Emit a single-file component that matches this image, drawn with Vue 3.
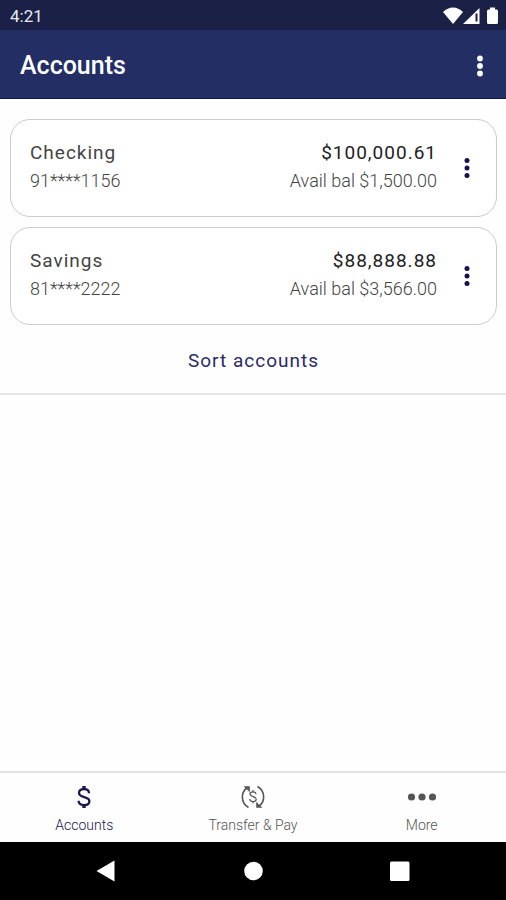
<script setup>
import { ref } from 'vue'

const accounts = [
  { name: 'Checking', number: '91****1156', balance: '$100,000.61', available: '$1,500.00' },
  { name: 'Savings', number: '81****2222', balance: '$88,888.88', available: '$3,566.00' },
]

const tabs = [
  { id: 'accounts', label: 'Accounts' },
  { id: 'transfer', label: 'Transfer & Pay' },
  { id: 'more', label: 'More' },
]

const activeTab = ref('accounts')
</script>

<template>
  <div class="screen">
    <div class="status-bar">
      <span>4:21</span>
      <svg class="status-icons" viewBox="0 0 56 20" aria-hidden="true">
        <path d="M0 6C3 3 6.500 1.500 10 1.500s7 1.500 10 4.500L10 18z" fill="#fff" />
        <path d="M20 18L36.500 2v16z" fill="#fff" />
        <path d="M32.500 7.500h2v8h-2z" fill="#1a2046" />
        <path d="M47 1.500h5v2h1.500q1.500 0 1.500 1.500v11.500q0 1.500-1.500 1.500h-8q-1.500 0-1.500-1.500V5q0-1.500 1.500-1.500h1.500z" fill="#fff" />
      </svg>
    </div>

    <header class="app-bar">
      <h1>Accounts</h1>
      <button class="icon-button" type="button" aria-label="More options">
        <svg class="kebab" viewBox="0 0 8 22" aria-hidden="true">
          <circle cx="4" cy="3.500" r="2.900" />
          <circle cx="4" cy="11" r="2.900" />
          <circle cx="4" cy="18.500" r="2.900" />
        </svg>
      </button>
    </header>

    <main class="content">
      <section class="panel">
        <article v-for="account in accounts" :key="account.number" class="card">
          <div class="identity">
            <h2 class="name">{{ account.name }}</h2>
            <p class="detail">{{ account.number }}</p>
          </div>
          <div class="amounts">
            <p class="balance">{{ account.balance }}</p>
            <p class="detail">Avail bal {{ account.available }}</p>
          </div>
          <button class="icon-button card-menu" type="button" :aria-label="account.name + ' options'">
            <svg class="kebab" viewBox="0 0 8 22" aria-hidden="true">
              <circle cx="4" cy="3.500" r="2.500" />
              <circle cx="4" cy="11" r="2.500" />
              <circle cx="4" cy="18.500" r="2.500" />
            </svg>
          </button>
        </article>
        <button class="sort" type="button">Sort accounts</button>
      </section>
    </main>

    <nav class="tabs" aria-label="Main">
      <button
        v-for="tab in tabs"
        :key="tab.id"
        type="button"
        class="tab"
        :class="{ active: tab.id === activeTab }"
        @click="activeTab = tab.id"
      >
        <svg v-if="tab.id === 'accounts'" class="tab-icon" viewBox="0 0 30 26" aria-hidden="true">
          <g fill="none" stroke="currentColor" stroke-width="2.300">
            <path d="M20 9.200C20 6.600 18 5.200 15 5.200S10 6.600 10 9c0 5.400 10.400 2.800 10.400 8.200 0 2.500-2.200 3.900-5.400 3.900s-5.400-1.500-5.400-4.300" />
            <path d="M15 2v3.500M15 20.500V24" stroke-width="3.400" />
          </g>
        </svg>
        <svg v-else-if="tab.id === 'transfer'" class="tab-icon" viewBox="0 0 30 26" aria-hidden="true">
          <g fill="none" stroke="currentColor" stroke-width="1.600">
            <path d="M10.500 23.500C2.500 19 2.500 8 9.500 3.500" />
            <path d="M19.500 2.500C27.500 7 27.500 18 20.500 22.500" />
            <path d="M18 10.200c0-1.500-1.200-2.300-3-2.300s-3 .8-3 2.200c0 3.300 6.200 1.800 6.200 5.100 0 1.500-1.300 2.300-3.200 2.300s-3.200-.9-3.200-2.500M15 6v2M15 17.500v2" stroke-width="1.200" />
          </g>
          <path d="M5.500 2.200h6.300V8.200L9.300 5.700zM24.500 23.800h-6.300v-6l2.500 2.500z" fill="currentColor" />
        </svg>
        <svg v-else class="tab-icon" viewBox="0 0 30 26" aria-hidden="true">
          <g fill="currentColor">
            <circle cx="4.500" cy="13" r="3.600" />
            <circle cx="15" cy="13" r="3.600" />
            <circle cx="25.500" cy="13" r="3.600" />
          </g>
        </svg>
        <span>{{ tab.label }}</span>
      </button>
    </nav>

    <div class="system-nav">
      <button type="button" aria-label="Back">
        <svg viewBox="0 0 22 22" aria-hidden="true"><path d="M1.500 11L19.500 0.500v21z" /></svg>
      </button>
      <button type="button" aria-label="Home">
        <svg viewBox="0 0 22 22" aria-hidden="true"><circle cx="11.500" cy="11" r="9.300" /></svg>
      </button>
      <button type="button" aria-label="Recent apps">
        <svg viewBox="0 0 22 22" aria-hidden="true"><rect x="1" y="1.500" width="19.500" height="19.500" rx="1.500" /></svg>
      </button>
    </div>
  </div>
</template>

<style>
body {
  margin: 0;
  background: #fff;
}
</style>

<style scoped>
.screen {
  display: flex;
  flex-direction: column;
  min-height: 100vh;
  background: #fefefe;
  color: #444;
  font-family: Roboto, "Liberation Sans", sans-serif;
}

button {
  margin: 0;
  padding: 0;
  border: 0;
  background: none;
  color: inherit;
  font: inherit;
  cursor: pointer;
}

h1,
h2,
p {
  margin: 0;
}

svg {
  display: block;
}

.status-bar {
  display: flex;
  align-items: center;
  justify-content: space-between;
  box-sizing: border-box;
  height: 30px;
  padding: 1px 7px 0 10px;
  background: #1a2046;
  color: #e8e9ef;
  font-size: 17px;
  line-height: 20px;
}

.status-icons {
  width: 56px;
  height: 20px;
}

.app-bar {
  display: flex;
  align-items: center;
  justify-content: space-between;
  box-sizing: border-box;
  height: 69px;
  padding: 3px 10px 0 20px;
  border-bottom: 1px solid #12134c;
  background: #232e65;
  color: #fff;
}

h1 {
  font-size: 25px;
  font-weight: 500;
  line-height: 32px;
}

.icon-button {
  display: grid;
  place-items: center;
  width: 32px;
  height: 40px;
}

.kebab {
  width: 8px;
  height: 22px;
  fill: currentColor;
}

.content {
  flex: 1;
}

.panel {
  display: flex;
  flex-direction: column;
  gap: 10px;
  padding: 20px 9px 8px 10px;
  border-bottom: 2px solid #e6e6e6;
  background: #fefefe;
}

.card {
  display: flex;
  align-items: center;
  box-sizing: border-box;
  min-height: 98px;
  padding: 0 13px 0 19px;
  border: 1px solid #ccc;
  border-radius: 20px;
  background: #fff;
}

.identity {
  flex: 1;
}

.amounts {
  text-align: right;
}

.name,
.balance {
  font-size: 19px;
  font-weight: 400;
  line-height: 28px;
  letter-spacing: 1px;
}

.balance {
  color: #222;
}

.detail {
  padding-bottom: 2px;
  color: #444;
  font-size: 18px;
  font-weight: 300;
  line-height: 28px;
}

.card-menu {
  margin-left: 14px;
  color: #14124f;
}

.sort {
  align-self: center;
  height: 50px;
  padding: 2px 16px 0;
  color: #2b2b66;
  font-size: 19px;
  line-height: 28px;
  letter-spacing: 1px;
}

.tabs {
  display: grid;
  grid-template-columns: repeat(3, 1fr);
  box-sizing: border-box;
  height: 71px;
  border-top: 2px solid #e4e4e4;
}

.tab {
  display: flex;
  flex-direction: column;
  align-items: center;
  gap: 5px;
  padding-top: 11px;
  color: #555;
  font-size: 14px;
  font-weight: 300;
  line-height: 20px;
}

.tab.active {
  color: #1b1850;
}

.tab-icon {
  width: 30px;
  height: 26px;
}

.system-nav {
  display: grid;
  grid-template-columns: repeat(3, 1fr);
  box-sizing: border-box;
  height: 58px;
  padding: 0 33px;
  background: #000;
}

.system-nav button {
  display: grid;
  place-items: center;
}

.system-nav svg {
  width: 22px;
  height: 22px;
  fill: #fff;
}
</style>
